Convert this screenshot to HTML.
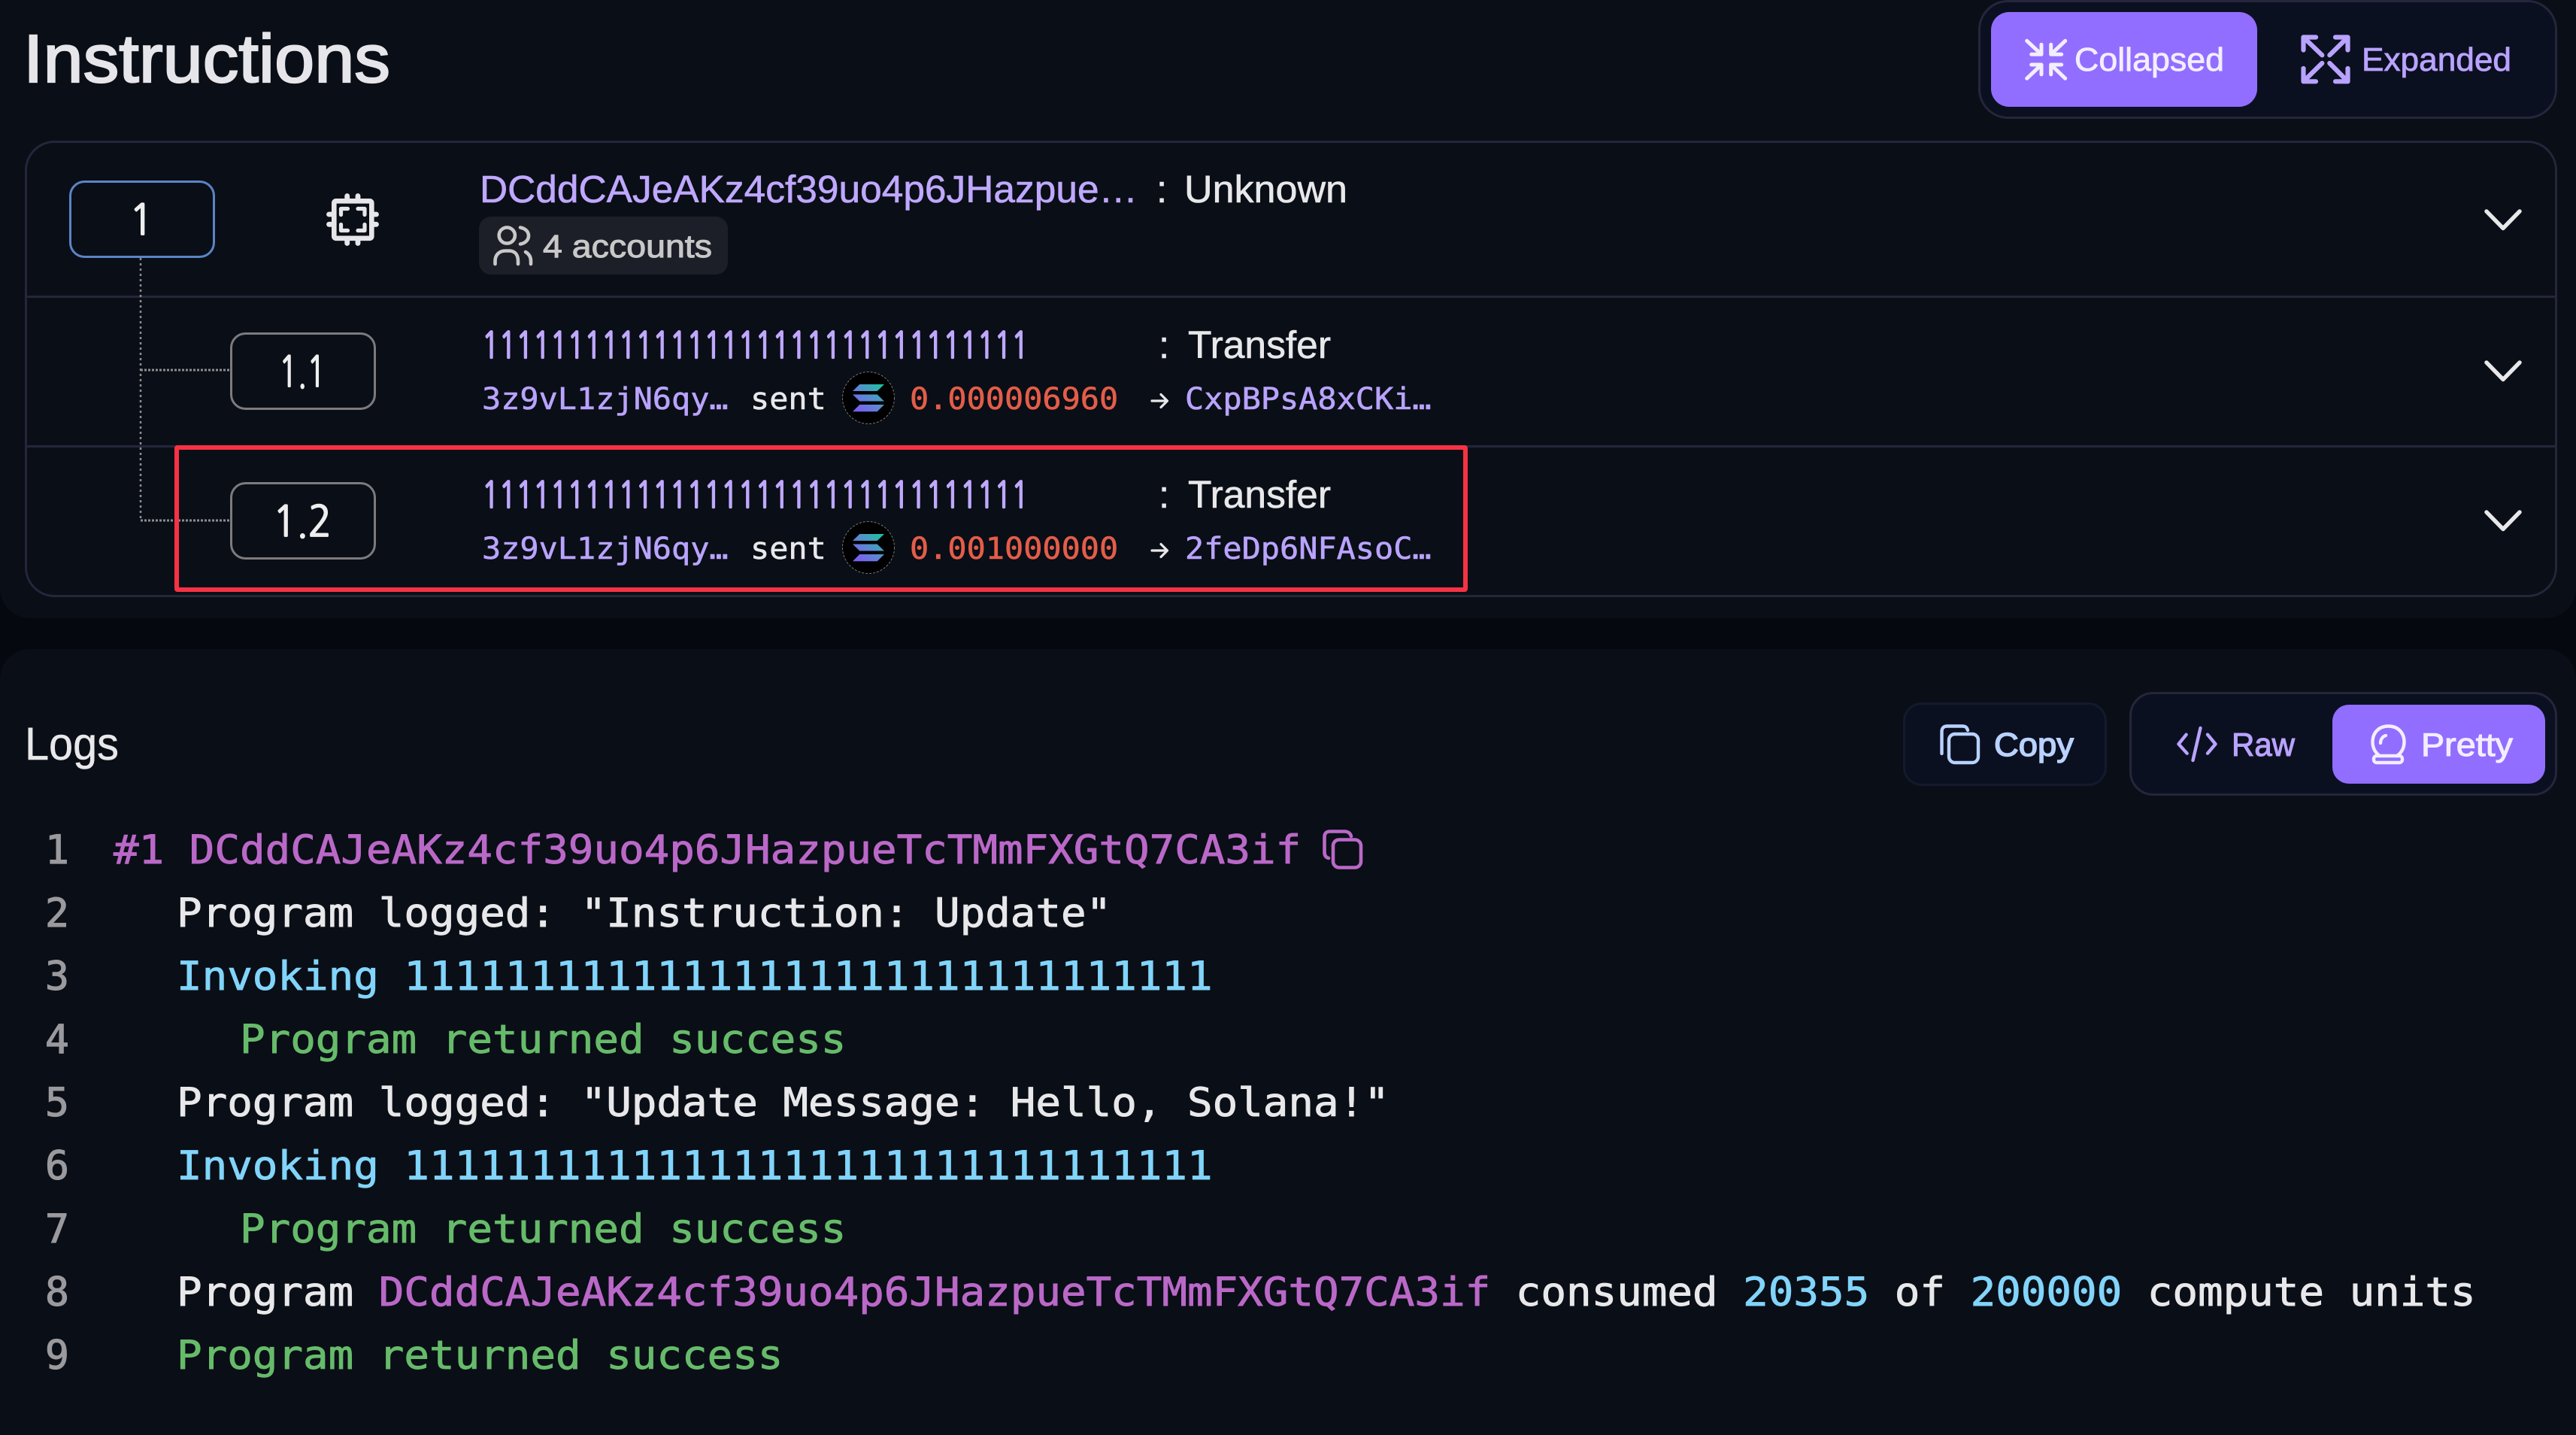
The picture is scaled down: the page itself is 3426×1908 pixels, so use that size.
<!DOCTYPE html>
<html lang="en">
<head>
<meta charset="utf-8">
<title>Instructions and Logs</title>
<style>
html,body{margin:0;padding:0;background:#05080f;width:3426px;height:1908px;overflow:hidden}
svg{display:block}
text{white-space:pre}
.s{font-family:"Liberation Sans",sans-serif}
.n{font-family:"NanumGothic",sans-serif}
.m{font-family:"DejaVu Sans Mono",monospace}
.log{font-size:53px;stroke-width:.9px}
.num{font-size:53px;fill:#9a9a9e;stroke:#9a9a9e;stroke-width:1.2px}
.w{fill:#e8e8ea;stroke:#e8e8ea}
.p{fill:#ba68c8;stroke:#ba68c8}
.b{fill:#81d4fa;stroke:#81d4fa}
.g{fill:#66bb6a;stroke:#66bb6a}
.sm{font-size:40px;stroke-width:.6px}
.lav{fill:#b9a3ff;stroke:#b9a3ff}
.red{fill:#e35d49;stroke:#e35d49}
.ttl{font-size:51px;stroke-width:.6px}
.ones{font-size:48px;stroke-width:2.2px}
.ic{fill:none;stroke-linecap:round;stroke-linejoin:round}
</style>
</head>
<body>
<svg xmlns="http://www.w3.org/2000/svg" width="3426" height="1908" viewBox="0 0 3426 1908">
<defs>
<linearGradient id="sol1" gradientUnits="userSpaceOnUse" x1="1138" y1="548" x2="1172" y2="508"><stop offset="0" stop-color="#8058f5"/><stop offset=".5" stop-color="#5a8ad0"/><stop offset="1" stop-color="#17c79e"/></linearGradient>
<linearGradient id="sol2" gradientUnits="userSpaceOnUse" x1="1138" y1="747" x2="1172" y2="707"><stop offset="0" stop-color="#8058f5"/><stop offset=".5" stop-color="#5a8ad0"/><stop offset="1" stop-color="#17c79e"/></linearGradient>
</defs>

<rect width="3426" height="1908" fill="#05080f"/>
<rect x="0" y="-60" width="3426" height="882" rx="40" fill="#0a0e16"/>
<rect x="0" y="863" width="3426" height="1105" rx="40" fill="#0a0e16"/>

<!-- Title -->
<text class="s" x="31" y="109" font-size="90" fill="#e6e6ea" stroke="#e6e6ea" stroke-width="2.2" textLength="488" lengthAdjust="spacingAndGlyphs">Instructions</text>

<!-- Collapsed / Expanded toggle -->
<rect x="2632.5" y="1.5" width="767" height="155" rx="38" fill="#0b1020" stroke="#25263c" stroke-width="3"/>
<rect x="2648" y="16" width="354" height="126" rx="24" fill="#916eff"/>
<g class="ic" stroke="#f3eeff" stroke-width="5">
<path d="M2695.7 54.3L2715 72.3M2701.7 72.3H2715V59.3"/>
<path d="M2746.7 54.3L2727.7 72.3M2741.7 72.3H2727.7V59.3"/>
<path d="M2695.7 104.3L2715 86M2701.7 86H2715V99"/>
<path d="M2746.7 104.3L2727.7 86M2741.7 86H2727.7V99"/>
</g>
<text class="s" x="2759" y="94" font-size="44" fill="#f3eeff" stroke="#f3eeff" stroke-width=".8" textLength="199" lengthAdjust="spacingAndGlyphs">Collapsed</text>
<g class="ic" stroke="#b9a3ff" stroke-width="6.2">
<path d="M3080 49.5H3063.5V66.5M3063.5 49.5L3088.3 73.3"/>
<path d="M3106 49.5H3122.5V66.5M3122.5 49.5L3098.3 73.3"/>
<path d="M3080 108.3H3063.5V91M3063.5 108.3L3088.3 84"/>
<path d="M3106 108.3H3122.5V91M3122.5 108.3L3098.3 84"/>
</g>
<text class="s" x="3141" y="94" font-size="44" fill="#b9a3ff" stroke="#b9a3ff" stroke-width=".8" textLength="199" lengthAdjust="spacingAndGlyphs">Expanded</text>

<!-- Card -->
<rect x="34.5" y="188.5" width="3365" height="604" rx="38" fill="#0a0e16" stroke="#25263c" stroke-width="3"/>
<rect x="33" y="393" width="3368" height="3" fill="#25263c"/>
<rect x="33" y="592" width="3368" height="3" fill="#25263c"/>

<!-- Tree lines -->
<path d="M187 343V692" fill="none" stroke="#8d8d90" stroke-width="2.5" stroke-dasharray="3 4"/>
<path d="M187 492H306M187 692H306" fill="none" stroke="#8d8d90" stroke-width="3" stroke-dasharray="3 2"/>

<!-- Index boxes -->
<rect x="93.5" y="241.5" width="191" height="100" rx="19" fill="#0a0e16" stroke="#5a85c6" stroke-width="3"/>
<text class="n" x="172" y="312" font-size="56" fill="#eeeeef" stroke="#eeeeef" stroke-width="1.800" textLength="32" lengthAdjust="spacingAndGlyphs">1</text>
<rect x="307.5" y="443.5" width="191" height="100" rx="19" fill="#0a0e16" stroke="#7b7b7f" stroke-width="3"/>
<text class="n" x="371" y="514" font-size="56" fill="#eeeeef" stroke="#eeeeef" stroke-width="1.800" textLength="62" lengthAdjust="spacingAndGlyphs">1.1</text>
<rect x="307.5" y="642.5" width="191" height="100" rx="19" fill="#0a0e16" stroke="#7b7b7f" stroke-width="3"/>
<text class="n" x="363" y="713" font-size="56" fill="#eeeeef" stroke="#eeeeef" stroke-width="1.800" textLength="78" lengthAdjust="spacingAndGlyphs">1.2</text>

<!-- Chip icon -->
<g class="ic" stroke="#e6e6e8">
<rect x="444.3" y="267.3" width="50" height="49.5" rx="2.5" stroke-width="6.6"/>
<path d="M461.7 260.5V264M476 260.5V264M461.7 320V323.5M476 320V323.5M437.5 285H441M437.5 298.3H441M497 285H500.5M497 298.3H500.5" stroke-width="6.8"/>
<path d="M453.5 285.5V277.5H462.5M485 285.5V277.5H476M453.5 298.5V306.5H462.5M485 298.5V306.5H476" stroke-width="5.2"/>
</g>

<!-- Row 1 -->
<text class="s ttl" x="638" y="269" fill="#bfa8ff" stroke="#bfa8ff" textLength="875" lengthAdjust="spacingAndGlyphs">DCddCAJeAKz4cf39uo4p6JHazpue…</text>
<text class="s ttl w" x="1538" y="269" stroke-width="1.6">:</text>
<text class="s ttl w" x="1575" y="269" textLength="217" lengthAdjust="spacingAndGlyphs">Unknown</text>
<rect x="637" y="288" width="331" height="77" rx="16" fill="#1c1f27"/>
<g class="ic" stroke="#c8c8c8" stroke-width="4.6">
<circle cx="674.3" cy="313" r="10.6"/>
<path d="M692 302.5C700 304 703 309 703 313.500C703 318 700 323 692 324.500"/>
<path d="M658.500 351V347C658.500 339 664 333.500 672 333.500H677C685 333.500 689 339 689 347V351"/>
<path d="M699 335C704 338 706 342 706 347V351"/>
</g>
<text class="s" x="722" y="342" font-size="43" fill="#c8c8c8" stroke="#c8c8c8" stroke-width="1" textLength="225" lengthAdjust="spacingAndGlyphs">4 accounts</text>
<path class="ic" d="M3307 281L3329 303.500L3351 281" stroke="#e8e8ea" stroke-width="5.500"/>

<!-- Row 1.1 -->
<text class="n ones" x="641" y="476" fill="#bfa8ff" stroke="#bfa8ff" textLength="727" lengthAdjust="spacingAndGlyphs">11111111111111111111111111111111</text>
<text class="s ttl w" x="1541" y="476" stroke-width="1.6">:</text>
<text class="s ttl w" x="1580" y="476" textLength="190" lengthAdjust="spacingAndGlyphs">Transfer</text>
<text class="m sm lav" x="641" y="544" textLength="327.6" lengthAdjust="spacingAndGlyphs">3z9vL1zjN6qy…</text>
<text class="m sm w" x="998" y="544" textLength="100.8" lengthAdjust="spacingAndGlyphs">sent</text>
<circle cx="1155" cy="529" r="34.500" fill="#000" stroke="#77777a" stroke-width="1" stroke-dasharray="3 2"/>
<g fill="url(#sol1)">
<path d="M1143.300 511H1176L1166.700 520H1134Z"/>
<path d="M1134 524.500H1166.700L1176 533.500H1143.300Z"/>
<path d="M1143.300 538H1176L1166.700 547.300H1134Z"/>
</g>
<text class="m sm red" x="1210" y="544" textLength="277.2" lengthAdjust="spacingAndGlyphs">0.000006960</text>
<path class="ic" d="M1532 533H1552M1544 524.500L1552.500 533L1544 541.500" stroke="#e8e8ea" stroke-width="3.200"/>
<text class="m sm lav" x="1576" y="544" textLength="327.6" lengthAdjust="spacingAndGlyphs">CxpBPsA8xCKi…</text>
<path class="ic" d="M3307 482L3329 504.500L3351 482" stroke="#e8e8ea" stroke-width="5.500"/>

<!-- Row 1.2 -->
<text class="n ones" x="641" y="675" fill="#bfa8ff" stroke="#bfa8ff" textLength="727" lengthAdjust="spacingAndGlyphs">11111111111111111111111111111111</text>
<text class="s ttl w" x="1541" y="675" stroke-width="1.6">:</text>
<text class="s ttl w" x="1580" y="675" textLength="190" lengthAdjust="spacingAndGlyphs">Transfer</text>
<text class="m sm lav" x="641" y="743" textLength="327.6" lengthAdjust="spacingAndGlyphs">3z9vL1zjN6qy…</text>
<text class="m sm w" x="998" y="743" textLength="100.8" lengthAdjust="spacingAndGlyphs">sent</text>
<circle cx="1155" cy="728" r="34.500" fill="#000" stroke="#77777a" stroke-width="1" stroke-dasharray="3 2"/>
<g fill="url(#sol2)">
<path d="M1143.300 710H1176L1166.700 719H1134Z"/>
<path d="M1134 723.500H1166.700L1176 732.500H1143.300Z"/>
<path d="M1143.300 737H1176L1166.700 746.300H1134Z"/>
</g>
<text class="m sm red" x="1210" y="743" textLength="277.2" lengthAdjust="spacingAndGlyphs">0.001000000</text>
<path class="ic" d="M1532 732H1552M1544 723.500L1552.500 732L1544 740.500" stroke="#e8e8ea" stroke-width="3.200"/>
<text class="m sm lav" x="1576" y="743" textLength="327.6" lengthAdjust="spacingAndGlyphs">2feDp6NFAsoC…</text>
<path class="ic" d="M3307 681L3329 703.500L3351 681" stroke="#e8e8ea" stroke-width="5.500"/>

<!-- Red highlight -->
<rect x="235" y="595" width="1714" height="189" fill="none" stroke="#f83245" stroke-width="6" rx="1"/>

<!-- Logs header -->
<text class="s" x="33" y="1010" font-size="61" fill="#e8e8ea" stroke="#e8e8ea" stroke-width=".5" textLength="125" lengthAdjust="spacingAndGlyphs">Logs</text>

<!-- Copy button -->
<rect x="2532.500" y="935.500" width="268" height="108" rx="23" fill="#0b1020" stroke="#141a2d" stroke-width="3"/>
<g class="ic" stroke="#b9d2ff" stroke-width="4.400">
<rect x="2592" y="976" width="39" height="38" rx="8"/>
<path d="M2582.500 1002V973C2582.500 968 2585 965.500 2590 965.500H2610C2614 965.500 2616 967 2617 971"/>
</g>
<text class="s" x="2652" y="1005" font-size="44" fill="#b9d2ff" stroke="#b9d2ff" stroke-width="1.500" textLength="106" lengthAdjust="spacingAndGlyphs">Copy</text>

<!-- Raw / Pretty toggle -->
<rect x="2833.500" y="921.500" width="566" height="135" rx="30" fill="#0b1020" stroke="#25263c" stroke-width="3"/>
<rect x="3102" y="937" width="283" height="105" rx="22" fill="#916eff"/>
<g class="ic" stroke="#b9a3ff" stroke-width="4.400">
<path d="M2907.600 976.700L2897.500 989.300L2908.700 1001.700"/>
<path d="M2936 976.700L2946.500 989.300L2936 1001.700"/>
<path d="M2926.500 968L2916.500 1011"/>
</g>
<text class="s" x="2968" y="1005" font-size="44" fill="#b9a3ff" stroke="#b9a3ff" stroke-width="1.100" textLength="84" lengthAdjust="spacingAndGlyphs">Raw</text>
<g class="ic" stroke="#f3eeff" stroke-width="4.400">
<path d="M3165 1005C3158 1000 3155.500 994 3155.500 986.500C3155.500 974 3164 965.500 3176.500 965.500C3189 965.500 3197.500 974 3197.500 986.500C3197.500 994 3195 1000 3188 1005"/>
<rect x="3157" y="1005" width="38" height="9" rx="4"/>
<path d="M3166 988C3166 983 3169 979 3173 978"/>
</g>
<text class="s" x="3220" y="1005" font-size="44" fill="#f3eeff" stroke="#f3eeff" stroke-width="1.100" textLength="122" lengthAdjust="spacingAndGlyphs">Pretty</text>

<!-- Log lines -->
<g class="m log">
<text class="num" x="60" y="1148">1</text>
<text class="num" x="60" y="1232">2</text>
<text class="num" x="60" y="1316">3</text>
<text class="num" x="60" y="1400">4</text>
<text class="num" x="60" y="1484">5</text>
<text class="num" x="60" y="1568">6</text>
<text class="num" x="60" y="1652">7</text>
<text class="num" x="60" y="1736">8</text>
<text class="num" x="60" y="1820">9</text>
<text class="p" x="151" y="1148" textLength="1579.2" lengthAdjust="spacingAndGlyphs">#1 DCddCAJeAKz4cf39uo4p6JHazpueTcTMmFXGtQ7CA3if</text>
<text class="w" x="235" y="1232" textLength="1243.2" lengthAdjust="spacingAndGlyphs">Program logged: "Instruction: Update"</text>
<text class="b" x="235" y="1316" textLength="1377.6" lengthAdjust="spacingAndGlyphs">Invoking 11111111111111111111111111111111</text>
<text class="g" x="319" y="1400" textLength="806.4" lengthAdjust="spacingAndGlyphs">Program returned success</text>
<text class="w" x="235" y="1484" textLength="1612.8" lengthAdjust="spacingAndGlyphs">Program logged: "Update Message: Hello, Solana!"</text>
<text class="b" x="235" y="1568" textLength="1377.6" lengthAdjust="spacingAndGlyphs">Invoking 11111111111111111111111111111111</text>
<text class="g" x="319" y="1652" textLength="806.4" lengthAdjust="spacingAndGlyphs">Program returned success</text>
<text x="235" y="1736" textLength="3057.6" lengthAdjust="spacingAndGlyphs"><tspan class="w">Program </tspan><tspan class="p">DCddCAJeAKz4cf39uo4p6JHazpueTcTMmFXGtQ7CA3if</tspan><tspan class="w"> consumed </tspan><tspan class="b">20355</tspan><tspan class="w"> of </tspan><tspan class="b">200000</tspan><tspan class="w"> compute units</tspan></text>
<text class="g" x="235" y="1820" textLength="806.4" lengthAdjust="spacingAndGlyphs">Program returned success</text>
</g>
<g class="ic" stroke="#ba68c8" stroke-width="4.600">
<rect x="1773" y="1116.500" width="37" height="37" rx="8"/>
<path d="M1767 1141C1763 1140 1761.500 1137 1761.500 1133V1113C1761.500 1108 1764 1105.500 1769 1105.500H1788C1793 1105.500 1796 1108 1797 1112"/>
</g>
</svg>
</body>
</html>
